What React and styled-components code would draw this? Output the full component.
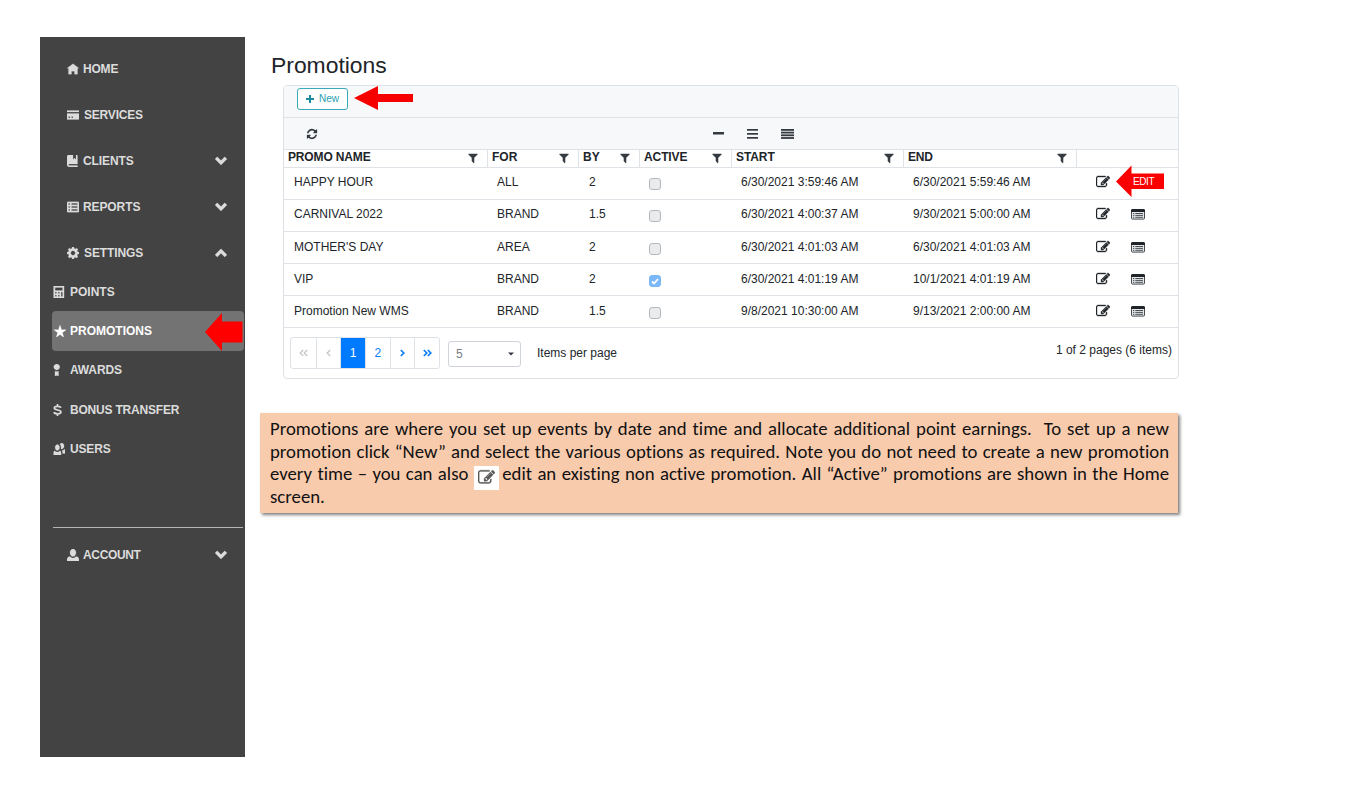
import React from "react";
import styled, { createGlobalStyle } from "styled-components";

const Global = createGlobalStyle`
  * { box-sizing: border-box; }
  body { margin: 0; background: #fff; color: #212529; font: 12px/16px "Liberation Sans", Arial, sans-serif; }
`;

const Page = styled.div`
  position: relative;
  display: flex;
  width: 1361px;
  height: 794px;
  padding: 37px 0 37px 40px;
  overflow: hidden;
`;

/* ---------- sidebar ---------- */
const Sidebar = styled.nav`
  width: 205px;
  height: 720px;
  background: #434343;
  color: #dcdcdc;
  font-size: 12px;
  font-weight: 700;
  display: flex;
  flex-direction: column;
`;
const MainList = styled.div`
  display: flex;
  flex-direction: column;
  gap: 7.9px;
  padding: 13px 18px 0 27px;
`;
const MainItem = styled.div`
  display: flex;
  align-items: center;
  height: 38px;
  gap: ${(p) => p.$gap || 4}px;
  letter-spacing: ${(p) => p.$ls || 0}px;
  & > svg:nth-of-type(2) { margin-left: auto; }
`;
const SubList = styled.div`
  padding: 0.5px 1px 0 12px;
`;
const SubItem = styled.div`
  display: flex;
  align-items: center;
  height: 39.3px;
  border-radius: 4px;
  padding-left: 1px;
  letter-spacing: ${(p) => p.$ls || 0}px;
  color: ${(p) => (p.$active ? "#fff" : "inherit")};
  background: ${(p) => (p.$active ? "#737373" : "transparent")};
`;
const SubIcon = styled.span`
  width: 17px;
  display: flex;
`;
const Divider = styled.div`
  height: 1.5px;
  margin: 58px 2px 8px 13px;
  background: #b4b5b4;
`;
const AccountBox = styled.div`
  padding: 0 18px 0 27px;
`;

const OI = {
  home: "M4 0l-4 3h1v4h2v-2h2v2h2v-4.03l1 .03-4-3z",
  card: "M.25 0c-.14 0-.25.11-.25.25v.75h8v-.75c0-.14-.11-.25-.25-.25h-7.500zm-.25 2v3.750c0 .14.110.25.25.25h7.500c.14 0 .25-.11.25-.25v-3.750h-8zm1 2h1v1h-1v-1zm2 0h1v1h-1v-1z",
  book: "M1 0c-.07 0-.13.01-.19.03-.39.08-.7.39-.78.78-.03.06-.03.12-.03.19v5.5c0 .83.67 1.5 1.5 1.5h5.5v-1h-5.5c-.28 0-.5-.22-.5-.5s.22-.5.5-.5h5.5v-5.5c0-.28-.22-.5-.5-.5h-.5v3l-1-1-1 1v-3h-3z",
  sheet: "M.75 0c-.4 0-.75.35-.75.75v5.5c0 .4.35.75.75.75h6.5c.4 0 .75-.35.75-.75v-5.5c0-.4-.35-.75-.75-.75h-6.5zm.25 1h1v1h-1v-1zm2 0h4v1h-4v-1zm-2 2h1v1h-1v-1zm2 0h4v1h-4v-1zm-2 2h1v1h-1v-1zm2 0h4v1h-4v-1z",
  cog: "M3.5 0l-.5 1.190-.31.13-1.190-.5-.72.72.5 1.190-.13.31-1.160.5v1l1.190.5.13.31-.5 1.190.72.72 1.190-.5.31.13.5 1.160h1l.5-1.160.31-.13 1.190.5.72-.72-.5-1.190.13-.31 1.160-.5v-1l-1.160-.5-.13-.31.5-1.190-.72-.72-1.190.5-.31-.13-.5-1.190h-1zm.5 2.500c.83 0 1.500.67 1.500 1.500s-.67 1.500-1.500 1.500-1.500-.67-1.500-1.500.67-1.500 1.500-1.500z",
  calc: "M.09 0c-.06 0-.09.04-.09.09v7.810c0 .05.04.09.09.09h6.810c.05 0 .09-.04.09-.09v-7.810c0-.06-.04-.09-.09-.09h-6.810zm.91 1h5v2h-5v-2zm0 3h1v1h-1v-1zm2 0h1v1h-1v-1zm2 0h1v3h-1v-3zm-4 2h1v1h-1v-1zm2 0h1v1h-1v-1z",
  star: "M4 0l-1 3h-3l2.500 2-1 3 2.500-2 2.500 2-1-3 2.500-2h-3l-1-3z",
  badge: "M2 0c-1.100 0-2 .9-2 2s.9 2 2 2 2-.9 2-2-.9-2-2-2zm-1.200 4.810v3.190l1.200-.4 1.200.4v-3.190c-.31.110-.75.190-1.200.190s-.89-.08-1.200-.190z",
  people: "M5.5 0c-.51 0-.95.35-1.220.88.45.54.72 1.280.72 2.130 0 .29-.03.55-.09.81.19.11.38.19.59.19.83 0 1.500-.9 1.500-2s-.67-2-1.500-2zm-3 1c-.83 0-1.500.9-1.500 2s.67 2 1.500 2 1.500-.9 1.500-2-.67-2-1.500-2zm4.750 3.160c-.43.51-1.020.82-1.690.84.27.38.44.84.44 1.340v.66h2v-1.660c0-.52-.31-.97-.75-1.190zm-6.500 1c-.44.22-.75.67-.75 1.190v1.660h5v-1.660c0-.52-.31-.97-.75-1.190-.45.53-1.060.84-1.750.84s-1.300-.32-1.750-.84z",
  person: "M4 0c-1.100 0-2 1.120-2 2.500s.9 2.500 2 2.500 2-1.120 2-2.500-.9-2.500-2-2.500zm-2.090 5c-1.060.05-1.910.92-1.910 2v1h8v-1c0-1.080-.84-1.950-1.910-2-.54.61-1.280 1-2.090 1-.81 0-1.550-.39-2.090-1z",
  down: "M1.500 1.200l-1.500 1.500 4 4 4-4-1.500-1.500-2.500 2.500-2.500-2.500z",
  up: "M4 1.200l-4 4 1.500 1.500 2.500-2.500 2.500 2.500 1.500-1.500-4-4z",
};
const Oi = ({ name, size = 12, h, view = "0 0 8 8" }) => (
  <svg width={size} height={h || size} viewBox={view} fill="currentColor" stroke="currentColor" strokeWidth="0.15">
    <path d={OI[name]} />
  </svg>
);
const Dollar = () => (
  <svg width="9" height="12" viewBox="0 0 9 12" fill="none" stroke="currentColor" strokeWidth="1.7">
    <path d="M4.500 0v2M4.500 10v2M8 3.800C7.600 2.700 6.500 2.300 4.600 2.300 2.500 2.300 1.300 2.900 1.300 4.100c0 2.600 6.600 1.200 6.600 3.800 0 1.200-1.200 1.900-3.400 1.900C2.400 9.800 1.300 9.200.9 8.100" />
  </svg>
);

/* ---------- main ---------- */
const Main = styled.main`
  display: flex;
  flex-direction: column;
  align-items: flex-start;
  padding-left: 15px;
`;
const Title = styled.h1`
  margin: 14px 0 0 11px;
  font-size: 22.9px;
  line-height: 28px;
  font-weight: 400;
  height: 34px;
`;
const Card = styled.section`
  width: 896px;
  height: 294px;
  margin-left: 23px;
  border: 1px solid #dee2e6;
  border-radius: 4px;
  overflow: hidden;
`;
const NewBar = styled.div`
  height: 32px;
  padding: 2px 0 0 13px;
  background: #f7f8fa;
  border-bottom: 1px solid #dfe2e6;
`;
const NewButton = styled.button`
  display: flex;
  align-items: center;
  gap: 5px;
  width: 51px;
  height: 22px;
  padding: 0 0 1px 8px;
  border: 1px solid #3aa9b8;
  border-radius: 3px;
  background: #fff;
  color: #2ba0b0;
  font: 10px "Liberation Sans", Arial, sans-serif;
`;
const ToolBar = styled.div`
  height: 31px;
  display: flex;
  align-items: center;
  background: #f7f8fa;
  padding-left: 22px;
  color: #343a40;
`;
const Sizes = styled.div`
  display: flex;
  align-items: center;
  margin-left: 395px;
  gap: 23px;
`;
const Row = styled.div`
  display: grid;
  grid-template-columns: 203px 91px 61px 92px 172px 173px 1fr;
  border-top: 1px solid #dfe2e6;
  height: ${(p) => (p.$head ? 18 : 32.1)}px;
  padding-top: ${(p) => (p.$low ? 1 : 0)}px;
`;
const HeadCell = styled.div`
  display: flex;
  align-items: center;
  justify-content: space-between;
  padding: 0 8px 3px ${(p) => (p.$first ? 3 : 4)}px;
  border-left: 1px solid ${(p) => (p.$first ? "transparent" : "#dfe2e6")};
  font-weight: 700;
  font-size: 12px;
  line-height: 15px;
  letter-spacing: ${(p) => p.$ls || 0}px;
  white-space: nowrap;
  & > svg { color: #343a40; }
`;
const Cell = styled.div`
  padding: 6px 0 0 ${(p) => p.$pad || 10}px;
  white-space: nowrap;
  letter-spacing: ${(p) => p.$ls || 0}px;
`;
const Check = styled.span`
  display: flex;
  align-items: center;
  justify-content: center;
  width: 12px;
  height: 12px;
  margin-top: 4px;
  border-radius: 3px;
  border: 1px solid ${(p) => (p.$on ? "#7ab8f7" : "#b4b8bd")};
  background: ${(p) => (p.$on ? "#7ab8f7" : "#e9ebed")};
`;
const Actions = styled.div`
  display: flex;
  align-items: flex-start;
  gap: 21px;
  padding: 7px 0 0 20px;
`;
const Footer = styled.div`
  display: flex;
  align-items: flex-start;
  border-top: 1px solid #dfe2e6;
  padding: 9px 6px 0 6px;
  height: 52px;
`;
const Pager = styled.div`
  display: flex;
  width: 150px;
  height: 32px;
  border: 1px solid #dee2e6;
  border-radius: 3px;
`;
const PageCell = styled.div`
  flex: 1;
  display: flex;
  align-items: center;
  justify-content: center;
  border-left: 1px solid ${(p) => (p.$first ? "transparent" : "#dee2e6")};
  color: ${(p) => (p.$active ? "#fff" : p.$off ? "#c3c7cb" : "#0a7cf5")};
  background: ${(p) => (p.$active ? "#007bff" : "transparent")};
`;
const Select = styled.div`
  display: flex;
  align-items: center;
  justify-content: space-between;
  width: 73px;
  height: 26px;
  margin: 4px 16px 0 8px;
  padding: 0 6px 0 7px;
  border: 1px solid #ced4da;
  border-radius: 3px;
  color: #777d83;
`;
const FootText = styled.span`
  margin-top: ${(p) => p.$top}px;
  margin-left: ${(p) => (p.$right ? "auto" : 0)};
`;

const Note = styled.aside`
  width: 918px;
  height: 100px;
  margin-top: 34px;
  padding: 5px 9px 0 10px;
  background: #f8cbad;
  box-shadow: 2px 2px 3px rgba(0, 0, 0, 0.5);
  color: #111;
  font: 18.75px/22.5px Carlito, Lato, sans-serif;
  font-variant-ligatures: none;
`;
const NoteLine = styled.div`
  height: 22.5px;
  white-space: pre-wrap;
  text-align: justify;
  text-align-last: ${(p) => (p.$last ? "left" : "justify")};
`;
const InlineIcon = styled.span`
  display: inline-flex;
  align-items: center;
  justify-content: center;
  width: 25px;
  height: 24px;
  margin: -4px -2px -4px 0;
  vertical-align: -8px;
  position: relative;
  top: -2px;
  background: #fff;
  color: #555;
`;

/* pointers that lie over the screen */
const Pointer = styled.svg`
  position: absolute;
  left: ${(p) => p.$x}px;
  top: ${(p) => p.$y}px;
`;
const PointerLabel = styled.span`
  position: absolute;
  left: 1133px;
  top: 174px;
  color: #fff;
  font-size: 10px;
  line-height: 15px;
  letter-spacing: -0.4px;
`;

const FA = {
  edit: "M888 1184l116-116-152-152-116 116v56h96v96h56zm440-720q-16-16-33 1l-350 350q-17 17-1 33t33-1l350-350q17-17 1-33zm80 594v190q0 119-84.500 203.500t-203.500 84.500h-832q-119 0-203.500-84.500t-84.500-203.500v-832q0-119 84.500-203.500t203.500-84.500h832q63 0 117 25 15 7 18 23 3 17-9 29l-49 49q-14 14-32 8-23-6-45-6h-832q-66 0-113 47t-47 113v832q0 66 47 113t113 47h832q66 0 113-47t47-113v-126q0-13 9-22l64-64q15-15 35-7t20 29zm-96-738l288 288-672 672h-288v-288zm444 132l-92 92-288-288 92-92q28-28 68-28t68 28l152 152q28 28 28 68t-28 68z",
  refresh: "M1639 1056q0 5-1 7-64 268-268 434.500t-478 166.500q-146 0-282.500-55t-243.500-157l-129 129q-19 19-45 19t-45-19-19-45v-448q0-26 19-45t45-19h448q26 0 45 19t19 45-19 45l-137 137q71 66 161 102t187 36q134 0 250-65t186-179q11-17 53-117 8-23 30-23h192q13 0 22.500 9.500t9.500 22.500zm25-800v448q0 26-19 45t-45 19h-448q-26 0-45-19t-19-45 19-45l138-138q-148-137-349-137-134 0-250 65t-186 179q-11 17-53 117-8 23-30 23h-199q-13 0-22.500-9.500t-9.500-22.500v-7q65-268 270-434.500t480-166.500q146 0 284 55.500t245 156.500l130-129q19-19 45-19t45 19 19 45z",
  filter: "M1595 295q17 41-14 70l-493 493v742q0 42-39 59-13 5-25 5-27 0-45-19l-256-256q-19-19-19-45v-486l-493-493q-31-29-14-70 17-39 59-39h1280q42 0 59 39z",
};
const Fa = ({ name, size = 13, w = 0 }) => (
  <svg width={size} height={size} viewBox="0 0 1792 1792" fill="currentColor" stroke="currentColor" strokeWidth={w}>
    <path d={FA[name]} />
  </svg>
);
const ListAlt = () => (
  <svg width="14" height="14" viewBox="0 -2 14 14">
    <rect x="0.5" y="0.5" width="13" height="9.600" rx="1" fill="#e4e6e8" stroke="#454b51" />
    <path d="M0 1.500a1.500 1.500 0 0 1 1.500-1.500h11a1.500 1.500 0 0 1 1.500 1.500V3H0z" fill="#212529" />
    <path d="M2 4.500h1.300M4.300 4.500H12M2 6.400h1.300M4.300 6.400H12M2 8.300h1.300M4.300 8.300H12" stroke="#4a5056" strokeWidth="1" />
  </svg>
);
const Lines = ({ w, ys, t }) => (
  <svg width={w} height="11" viewBox={`0 0 ${w} 11`} fill="currentColor">
    {ys.map((y) => (
      <rect key={y} x="0" y={y} width={w} height={t} />
    ))}
  </svg>
);
const Chevs = ({ dirs, flip }) => (
  <svg width={dirs === 2 ? 9 : 5} height="8" viewBox={`0 0 ${dirs === 2 ? 9 : 5} 8`} fill="none" stroke="currentColor" strokeWidth={flip ? 1.3 : 1.7} transform={flip ? "scale(-1 1)" : undefined}>
    <path d="M.8 1l3 3-3 3" />
    {dirs === 2 && <path d="M4.800 1l3 3-3 3" />}
  </svg>
);

const columns = [
  ["PROMO NAME", -0.15],
  ["FOR", 0],
  ["BY", 0],
  ["ACTIVE", -0.1],
  ["START", -0.1],
  ["END", -0.2],
];
const rows = [
  ["HAPPY HOUR", "ALL", "2", false, "6/30/2021 3:59:46 AM", "6/30/2021 5:59:46 AM"],
  ["CARNIVAL 2022", "BRAND", "1.5", false, "6/30/2021 4:00:37 AM", "9/30/2021 5:00:00 AM"],
  ["MOTHER'S DAY", "AREA", "2", false, "6/30/2021 4:01:03 AM", "6/30/2021 4:01:03 AM"],
  ["VIP", "BRAND", "2", true, "6/30/2021 4:01:19 AM", "10/1/2021 4:01:19 AM"],
  ["Promotion New WMS", "BRAND", "1.5", false, "9/8/2021 10:30:00 AM", "9/13/2021 2:00:00 AM"],
];

export default function App() {
  return (
    <Page>
      <Global />
      <Sidebar>
        <MainList>
          <MainItem $ls={-0.2}><Oi name="home" view="0 -.5 8 8" />HOME</MainItem>
          <MainItem $gap={5} $ls={-0.2}><Oi name="card" view="0 -1 8 8" />SERVICES</MainItem>
          <MainItem $ls={-0.1}><Oi name="book" />CLIENTS<Oi name="down" /></MainItem>
          <MainItem $ls={-0.1}><Oi name="sheet" view="0 -.5 8 8" />REPORTS<Oi name="down" /></MainItem>
          <MainItem $gap={5} $ls={-0.1}><Oi name="cog" />SETTINGS<Oi name="up" /></MainItem>
        </MainList>
        <SubList>
          <SubItem><SubIcon><Oi name="calc" view="-.4 0 8 8" /></SubIcon>POINTS</SubItem>
          <SubItem $active><SubIcon><Oi name="star" view="-.5 0 8 8" size={12.5} /></SubIcon>PROMOTIONS</SubItem>
          <SubItem $ls={-0.15}><SubIcon><Oi name="badge" view="-.5 0 8 8" /></SubIcon>AWARDS</SubItem>
          <SubItem $ls={-0.2}><SubIcon><Dollar /></SubIcon>BONUS TRANSFER</SubItem>
          <SubItem $ls={-0.15}><SubIcon><Oi name="people" view="-.4 0 8 8" /></SubIcon>USERS</SubItem>
        </SubList>
        <Divider />
        <AccountBox>
          <MainItem $ls={-0.35}><Oi name="person" />ACCOUNT<Oi name="down" /></MainItem>
        </AccountBox>
      </Sidebar>

      <Main>
        <Title>Promotions</Title>
        <Card>
          <NewBar>
            <NewButton>
              <svg width="8" height="8" viewBox="0 0 8 8" stroke="#1b8c9c" strokeWidth="2"><path d="M4 0v8M0 4h8" /></svg>
              New
            </NewButton>
          </NewBar>
          <ToolBar>
            <Fa name="refresh" size={12} />
            <Sizes>
              <Lines w={11} ys={[4]} t={2.5} />
              <Lines w={11} ys={[1, 5, 9]} t={1.7} />
              <Lines w={13} ys={[1, 3.7, 6.4, 9.1]} t={1.8} />
            </Sizes>
          </ToolBar>
          <Row $head>
            {columns.map(([c, ls], i) => (
              <HeadCell key={c} $first={i === 0} $ls={ls}>{c}<Fa name="filter" size={12} /></HeadCell>
            ))}
            <HeadCell />
          </Row>
          {rows.map((r, i) => (
            <Row key={r[0]} $low={i > 1}>
              <Cell>{r[0]}</Cell>
              <Cell>{r[1]}</Cell>
              <Cell $pad={11}>{r[2]}</Cell>
              <Cell>
                <Check $on={r[3]}>
                  {r[3] && <svg width="8" height="7" viewBox="0 0 8 7" fill="none" stroke="#fff" strokeWidth="1.800"><path d="M1 3.500l2 2 4-4.300" /></svg>}
                </Check>
              </Cell>
              <Cell>{r[4]}</Cell>
              <Cell>{r[5]}</Cell>
              <Actions><Fa name="edit" size={14} w={50} />{i > 0 && <ListAlt />}</Actions>
            </Row>
          ))}
          <Footer>
            <Pager>
              <PageCell $first $off><Chevs dirs={2} flip /></PageCell>
              <PageCell $off><Chevs dirs={1} flip /></PageCell>
              <PageCell $active>1</PageCell>
              <PageCell>2</PageCell>
              <PageCell><Chevs dirs={1} /></PageCell>
              <PageCell><Chevs dirs={2} /></PageCell>
            </Pager>
            <Select>
              5
              <svg width="6" height="4" viewBox="0 0 6 4" fill="#343a40"><path d="M0 .5h6L3 3.500z" /></svg>
            </Select>
            <FootText $top={8}>Items per page</FootText>
            <FootText $top={5} $right>1 of 2 pages (6 items)</FootText>
          </Footer>
        </Card>
        <Note>
          <NoteLine>Promotions are where you set up events by date and time and allocate additional point earnings.  To set up a new</NoteLine>
          <NoteLine>promotion click “New” and select the various options as required. Note you do not need to create a new promotion</NoteLine>
          <NoteLine>every time – you can also <InlineIcon><Fa name="edit" size={17} w={30} /></InlineIcon> edit an existing non active promotion. All “Active” promotions are shown in the Home</NoteLine>
          <NoteLine $last>screen.</NoteLine>
        </Note>
      </Main>

      <Pointer $x={354} $y={85} width="60" height="26" fill="#f60000"><path d="M0 13L24 1v8h35v8H24v8z" /></Pointer>
      <Pointer $x={205} $y={312} width="38" height="40" fill="#ff0000"><path d="M0 20L17 1v8.500h20.500v21H17V39z" /></Pointer>
      <Pointer $x={1116} $y={165} width="49" height="33" fill="#fb0000"><path d="M0 16.500L15.500 .5V8.500H48v15.500H15.500v8z" /></Pointer>
      <PointerLabel>EDIT</PointerLabel>
    </Page>
  );
}
